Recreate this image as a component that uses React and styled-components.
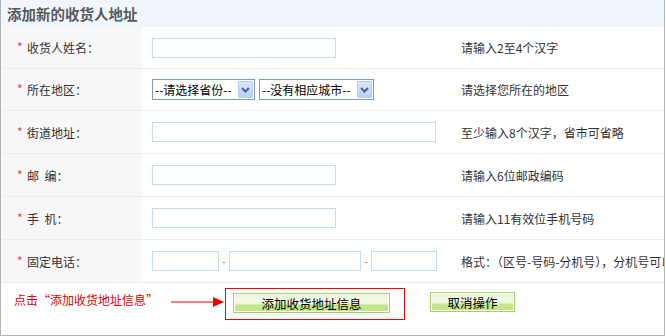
import React from 'react';
import styled, { createGlobalStyle } from 'styled-components';

const Global = createGlobalStyle`
  html, body {
    margin: 0;
    padding: 0;
    background: #fff;
  }
  * {
    box-sizing: border-box;
  }
`;

const Panel = styled.div`
  width: 665px;
  height: 336px;
  border: 1px solid #b4b4b4;
  border-top: none;
  overflow: hidden;
  font-family: "Noto Sans CJK SC", "Liberation Sans", sans-serif;
  font-size: 12px;
  color: #333;
  display: flex;
  flex-flow: column;
`;

const Header = styled.div`
  height: 27px;
  background: #f0f5fe;
  padding-left: 6px;
  display: flex;
  align-items: center;
  font-size: 14.5px;
  font-weight: bold;
  color: #5a5a5a;
`;

const Row = styled.div`
  display: grid;
  grid-template-columns: 141px 319px 1fr;
  height: ${p => p.h}px;
  border-bottom: 1px solid #ededed;
`;

const Label = styled.div`
  background: #f7f7f7;
  padding-left: 16px;
  display: flex;
  align-items: center;
  white-space: nowrap;
`;

const Star = styled.span`
  color: #ff3355;
  width: 10px;
  font-size: 12px;
  position: relative;
  top: -1px;
`;

const Field = styled.div`
  padding-left: 10px;
  display: flex;
  align-items: center;
`;

const Hint = styled.div`
  display: flex;
  align-items: center;
  white-space: nowrap;
  overflow: hidden;
`;

const TextBox = styled.div`
  width: ${p => p.w}px;
  height: 20px;
  border: 1px solid #c1dbf0;
  background: #fff;
`;

const Dash = styled.span`
  width: ${p => p.w || 10}px;
  text-align: center;
  color: #c87a10;
  font-size: 11px;
`;

const Select = styled.div`
  width: ${p => p.w}px;
  height: 21px;
  border: 1px solid #7f9db9;
  background: #fff;
  display: flex;
  align-items: center;
  justify-content: space-between;
  padding: 0 1px 0 2px;
  margin-right: 4px;
  color: #000;
  font-size: 12px;
  white-space: nowrap;
`;

const DropBtn = styled.div`
  width: 15px;
  height: 17px;
  border: 1px solid #b6cbf3;
  border-radius: 1px;
  background: linear-gradient(#dbe6fd, #b9cff8);
  display: flex;
  align-items: center;
  justify-content: center;
`;

const Footer = styled.div`
  flex: 1;
  display: flex;
  align-items: flex-start;
  padding: 5px 0 0 13px;
`;

const Note = styled.span`
  color: #e60000;
  margin-top: 3px;
  width: 156px;
  white-space: nowrap;
`;

const Arrow = styled.svg`
  margin-top: 8px;
  width: 55px;
  height: 12px;
`;

const Focus = styled.div`
  width: 180px;
  height: 32px;
  border: 1px solid #f00;
  padding: 4px 0 0 7px;
`;

const Button = styled.button`
  width: ${p => p.w}px;
  height: 20px;
  margin: ${p => (p.gap ? `4px 0 0 ${p.gap}px` : 0)};
  padding: 0;
  border: 1px solid #a3d26b;
  box-shadow: inset 0 0 0 1px #fafff2;
  background: linear-gradient(#e6f2d8 0%, #f4fbe9 35%, #eaf8d4 55%, #c3e68c 62%, #c2e58a 100%);
  font-family: "Noto Sans CJK SC", "Liberation Sans", sans-serif;
  font-size: 12.5px;
  color: #000;
  line-height: 17px;
`;

const Chevron = () => (
  <svg width="9" height="6" viewBox="0 0 9 6">
    <path d="M1 1 L4.5 4.5 L8 1" stroke="#4d6185" strokeWidth="2" fill="none" />
  </svg>
);

const rows = [
  { label: '收货人姓名：', h: 42, hint: '请输入2至4个汉字', field: <TextBox w={184} /> },
  {
    label: '所在地区：', h: 42, hint: '请选择您所在的地区',
    field: (
      <>
        <Select w={103}>--请选择省份--<DropBtn><Chevron /></DropBtn></Select>
        <Select w={115}>--没有相应城市--<DropBtn><Chevron /></DropBtn></Select>
      </>
    ),
  },
  { label: '街道地址：', h: 43, hint: '至少输入8个汉字，省市可省略', field: <TextBox w={284} /> },
  { label: '邮\u00a0\u00a0编：', h: 43, hint: '请输入6位邮政编码', field: <TextBox w={184} /> },
  { label: '手\u00a0\u00a0机：', h: 43, hint: '请输入11有效位手机号码', field: <TextBox w={184} /> },
  {
    label: '固定电话：', h: 43, hint: '格式：（区号-号码-分机号），分机号可以为空',
    field: (
      <>
        <TextBox w={67} />
        <Dash>-</Dash>
        <TextBox w={132} />
        <Dash>-</Dash>
        <TextBox w={66} />
      </>
    ),
  },
];

export default function App() {
  return (
    <>
      <Global />
      <Panel>
        <Header>添加新的收货人地址</Header>
        {rows.map(r => (
          <Row key={r.label} h={r.h}>
            <Label><Star>*</Star>{r.label}</Label>
            <Field>{r.field}</Field>
            <Hint>{r.hint}</Hint>
          </Row>
        ))}
        <Footer>
          <Note>点击“添加收货地址信息”</Note>
          <Arrow viewBox="0 0 55 12">
            <line x1="1" y1="6" x2="46" y2="6" stroke="#e00" strokeWidth="1" />
            <polygon points="43,1 54,6 43,11" fill="#e00" />
          </Arrow>
          <Focus>
            <Button w={157}>添加收货地址信息</Button>
          </Focus>
          <Button w={85} gap={25}>取消操作</Button>
        </Footer>
      </Panel>
    </>
  );
}
